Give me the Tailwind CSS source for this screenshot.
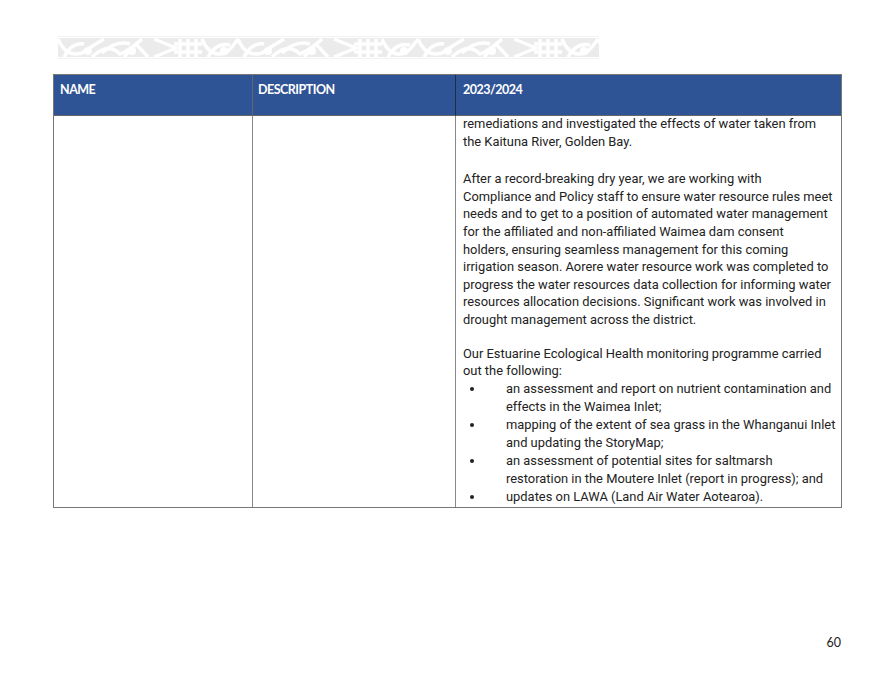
<!DOCTYPE html>
<html lang="en">
<head>
  <meta charset="UTF-8">
  <title>Report page 60</title>
  <script src="https://cdn.jsdelivr.net/npm/@tailwindcss/browser@4"></script>
</head>
<body class="bg-white">
  <div class="w-[894px] h-[675px] flex flex-col pl-[53px] pr-[52px] font-['Roboto',sans-serif] text-[12.9px] leading-[17.6px] text-[#222]">
    <!-- koru band -->
    <svg class="mt-[36px] ml-[5px] h-[24px] w-[541px] shrink-0" viewBox="0 0 541 24">
      <defs>
        <pattern id="koru" width="180" height="24" patternUnits="userSpaceOnUse">
          <rect y="2" width="180" height="19" fill="#ebebeb"/>
          <g fill="none" stroke="#fff" stroke-width="3.5">
            <path d="M0 3 Q8 22 24 17 Q34 10 46 3"/>
            <path d="M6 21 Q14 6 26 8"/>
            <path d="M34 21 Q50 6 62 18 Q72 14 84 3"/>
            <path d="M44 17 Q58 4 72 8"/>
            <path d="M66 21 L78 8 L90 21"/>
            <path d="M96 3 L118 12 L96 21"/>
            <path d="M122 3 V21 M130 3 V21 M138 3 V21 M116 8 H144 M116 16 H144"/>
            <path d="M144 3 Q152 22 168 17 Q174 12 180 3"/>
            <path d="M150 21 Q158 6 172 9"/>
          </g>
          <circle cx="30" cy="15" r="4" fill="#fff"/>
          <circle cx="74" cy="15" r="4" fill="#fff"/>
          <circle cx="166" cy="15" r="4" fill="#fff"/>
          <path d="M0 0.5 H180 M0 22.5 H180" stroke="#f2f2f2"/>
        </pattern>
      </defs>
      <rect width="541" height="24" fill="url(#koru)"/>
    </svg>

    <!-- table -->
    <div class="mt-[14px] w-[789px] border border-[#777] grid grid-cols-[199px_203px_1fr] whitespace-nowrap">
      <div class="h-[41px] bg-[#2f5496] border-r border-b border-[#666] px-[6px] pt-[6px] text-white font-bold font-['Lato',sans-serif] text-[12.5px] tracking-[-0.5px]">NAME</div>
      <div class="h-[41px] bg-[#2f5496] border-r border-b border-r-[#1f2a44] border-b-[#666] px-[5px] pt-[6px] text-white font-bold font-['Lato',sans-serif] text-[12.5px] tracking-[-0.5px]">DESCRIPTION</div>
      <div class="h-[41px] bg-[#2f5496] border-b border-[#666] px-[7px] pt-[6px] text-white font-bold font-['Lato',sans-serif] text-[12.5px] tracking-[-0.5px]">2023/2024</div>
      <div class="border-r border-[#888]"></div>
      <div class="border-r border-[#888]"></div>
      <div class="pl-[7px] pr-[4px] h-[391px]">
        <p class="-mt-[1px]">remediations and investigated the effects of water taken from<br>the Kaituna River, Golden Bay.</p>
        <p class="mt-[20px]">After a record-breaking dry year, we are working with<br>Compliance and Policy staff to ensure water resource rules meet<br>needs and to get to a position of automated water management<br>for the affiliated and non-affiliated Waimea dam consent<br>holders, ensuring seamless management for this coming<br>irrigation season. Aorere water resource work was completed to<br>progress the water resources data collection for informing water<br>resources allocation decisions. Significant work was involved in<br>drought management across the district.</p>
        <p class="mt-[16px]">Our Estuarine Ecological Health monitoring programme carried<br>out the following:</p>
        <ul class="pl-[7px] leading-[18px]">
          <li class="flex"><span class="w-[36px] pt-[7px]"><span class="block size-[4px] rounded-full bg-[#222]"></span></span><span>an assessment and report on nutrient contamination and<br>effects in the Waimea Inlet;</span></li>
          <li class="flex"><span class="w-[36px] pt-[7px]"><span class="block size-[4px] rounded-full bg-[#222]"></span></span><span>mapping of the extent of sea grass in the Whanganui Inlet<br>and updating the StoryMap;</span></li>
          <li class="flex"><span class="w-[36px] pt-[7px]"><span class="block size-[4px] rounded-full bg-[#222]"></span></span><span>an assessment of potential sites for saltmarsh<br>restoration in the Moutere Inlet (report in progress); and</span></li>
          <li class="flex"><span class="w-[36px] pt-[7px]"><span class="block size-[4px] rounded-full bg-[#222]"></span></span><span>updates on LAWA (Land Air Water Aotearoa).</span></li>
        </ul>
      </div>
    </div>

    <div class="mt-[126px] text-right font-['Lato',sans-serif] text-[12.5px] pr-px">60</div>
  </div>
</body>
</html>
